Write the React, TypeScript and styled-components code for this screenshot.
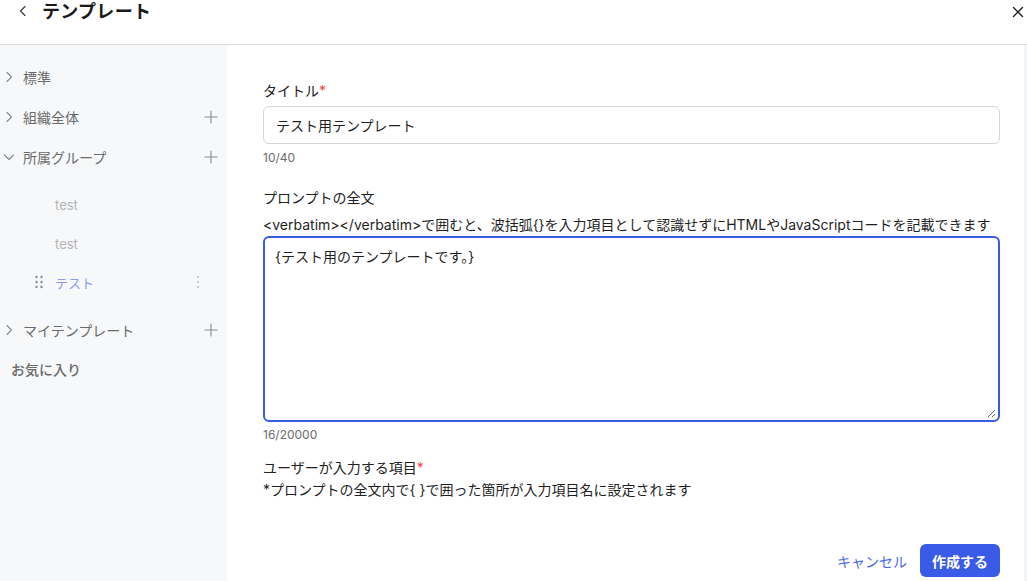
import React from 'react'
import styled, { createGlobalStyle } from 'styled-components'

const GlobalStyle = createGlobalStyle`
  html, body { margin: 0; padding: 0; background: #fff; }
  body {
    font-family: Inter, "Noto Sans CJK JP", sans-serif;
    color: #1f1f1f;
    overflow: hidden;
  }
  * { box-sizing: border-box; }
`

const Chevron = ({ dir = 'right', size = 14, color = '#8a8a8a' }: { dir?: 'right' | 'down' | 'left'; size?: number; color?: string }) => {
  const d = dir === 'right' ? 'M5 2.5 9.5 7 5 11.5' : dir === 'down' ? 'M2.5 5 7 9.5 11.5 5' : 'M9 2.5 4.5 7 9 11.5'
  return (
    <svg width={size} height={size} viewBox="0 0 14 14" fill="none">
      <path d={d} stroke={color} strokeWidth="1.1" strokeLinecap="round" strokeLinejoin="round" />
    </svg>
  )
}

const Plus = () => (
  <svg width="14" height="14" viewBox="0 0 14 14" fill="none">
    <path d="M7 1v12M1 7h12" stroke="#8a8a8a" strokeWidth="1.1" strokeLinecap="round" />
  </svg>
)

const Grip = () => (
  <svg width="10" height="14" viewBox="0 0 10 14" fill="#8a8a8a">
    {[2, 7, 12].map(y => (
      <React.Fragment key={y}>
        <circle cx="2.5" cy={y} r="1.2" />
        <circle cx="7.5" cy={y} r="1.2" />
      </React.Fragment>
    ))}
  </svg>
)

const Kebab = () => (
  <svg width="4" height="14" viewBox="0 0 4 14" fill="#c4c4c4">
    <circle cx="2" cy="2" r="1.1" />
    <circle cx="2" cy="7" r="1.1" />
    <circle cx="2" cy="12" r="1.1" />
  </svg>
)

const Close = () => (
  <svg width="14" height="14" viewBox="0 0 14 14" fill="none">
    <path d="M2.5 2.5l9 9M11.5 2.5l-9 9" stroke="#222" strokeWidth="1.4" strokeLinecap="round" />
  </svg>
)

const App = () => {
  return (
    <Page>
      <GlobalStyle />
      <Header>
        <BackButton>
          <Chevron dir="left" size={14} color="#333" />
        </BackButton>
        <Title>テンプレート</Title>
        <CloseButton>
          <Close />
        </CloseButton>
      </Header>

      <Body>
        <Sidebar>
          <Group>
            <Chevron />
            <GroupName>標準</GroupName>
          </Group>
          <Group>
            <Chevron />
            <GroupName>組織全体</GroupName>
            <AddButton><Plus /></AddButton>
          </Group>
          <Group>
            <Chevron dir="down" />
            <GroupName>所属グループ</GroupName>
            <AddButton><Plus /></AddButton>
          </Group>
          <Children>
            <Child>test</Child>
            <Child>test</Child>
            <Child active>
              <Handle><Grip /></Handle>
              テスト
              <More><Kebab /></More>
            </Child>
          </Children>
          <Group>
            <Chevron />
            <GroupName>マイテンプレート</GroupName>
            <AddButton><Plus /></AddButton>
          </Group>
          <Favorites>お気に入り</Favorites>
        </Sidebar>

        <Main>
          <Field space={22}>
            <Label>タイトル<Req>*</Req></Label>
            <Input>テスト用テンプレート</Input>
            <Counter>10/40</Counter>
          </Field>

          <Field space={15}>
            <Label>プロンプトの全文</Label>
            <Hint>&lt;verbatim&gt;&lt;/verbatim&gt;で囲むと、波括弧{'{}'}を入力項目として認識せずにHTMLやJavaScriptコードを記載できます</Hint>
            <TextArea>
              {'{テスト用のテンプレートです。}'}
              <Resize>
                <svg width="9" height="9" viewBox="0 0 9 9" fill="none">
                  <path d="M8 1 1 8M8 5 5 8" stroke="#666" strokeWidth="1" />
                </svg>
              </Resize>
            </TextArea>
            <Counter>16/20000</Counter>
          </Field>

          <Field>
            <Label>ユーザーが入力する項目<Req>*</Req></Label>
            <Note>*プロンプトの全文内で{'{ }'}で囲った箇所が入力項目名に設定されます</Note>
          </Field>

          <Actions>
            <TextButton>キャンセル</TextButton>
            <PrimaryButton>作成する</PrimaryButton>
          </Actions>
        </Main>
        <Rail />
      </Body>
    </Page>
  )
}

export default App

const Page = styled.div`
  width: 1027px;
  height: 581px;
  display: flex;
  flex-direction: column;
`
const Header = styled.header`
  height: 45px;
  flex-shrink: 0;
  display: flex;
  align-items: flex-start;
  padding: 0 0 0 16px;
  border-bottom: 1px solid #dcdcdc;
`
const BackButton = styled.span`
  width: 14px;
  height: 14px;
  display: flex;
  margin: 4px 12px 0 0;
`
const Title = styled.h1`
  margin: 0;
  font-size: 18px;
  line-height: 24px;
  font-weight: 700;
  color: #1a1a1a;
  letter-spacing: 0.3px;
  flex: 1;
`
const CloseButton = styled.span`
  width: 14px;
  height: 14px;
  display: flex;
  margin: 5px 2px 0 0;
`
const Body = styled.div`
  flex: 1;
  display: flex;
  min-height: 0;
`
const Sidebar = styled.nav`
  width: 227px;
  flex-shrink: 0;
  background: #f7f8fa;
  padding-top: 12px;
`
const Group = styled.div`
  height: 40px;
  display: flex;
  align-items: center;
  padding: 0 9px 0 2px;
  gap: 7px;
`
const GroupName = styled.span`
  flex: 1;
  font-size: 14px;
  color: #6b6b6b;
`
const AddButton = styled.span`
  display: flex;
`
const Children = styled.div`
  padding: 8px 0 8px;
`
const Child = styled.div<{ active?: boolean }>`
  position: relative;
  height: 39px;
  display: flex;
  align-items: center;
  padding-left: 55px;
  font-size: 13px;
  color: ${p => (p.active ? '#8c9bf2' : '#b4b4b4')};
`
const Handle = styled.span`
  position: absolute;
  left: 34px;
  top: 12px;
  display: flex;
`
const More = styled.span`
  position: absolute;
  left: 196px;
  top: 12px;
  display: flex;
`
const Favorites = styled.div`
  height: 37px;
  display: flex;
  align-items: center;
  padding-left: 11px;
  font-size: 14px;
  font-weight: 500;
  color: #6b6b6b;
`
const Main = styled.main`
  flex: 1;
  padding: 36px 24px 0 36px;
  display: flex;
  flex-direction: column;
`
const Rail = styled.div`
  width: 3px;
  background: #f3f4f6;
`
const Field = styled.div<{ space?: number }>`
  display: flex;
  flex-direction: column;
  margin-bottom: ${p => p.space ?? 20}px;
`
const Label = styled.div`
  font-size: 14px;
  line-height: 20px;
  color: #222;
  margin-bottom: 5px;
`
const Req = styled.span`
  color: #ef4444;
`
const Input = styled.div`
  height: 38px;
  border: 1px solid #d6d6d6;
  border-radius: 6px;
  display: flex;
  align-items: center;
  padding: 0 12px;
  font-size: 14px;
  color: #1f1f1f;
`
const Counter = styled.div`
  font-size: 12px;
  line-height: 16px;
  color: #6b6b6b;
  margin-top: 6px;
`
const Hint = styled.div`
  font-size: 14px;
  line-height: 20px;
  color: #1f1f1f;
  margin: 2px 0 1px;
  white-space: nowrap;
`
const TextArea = styled.div`
  position: relative;
  height: 186px;
  border: 2px solid #3a5ae8;
  border-radius: 6px;
  padding: 9px 10px;
  font-size: 14px;
  line-height: 20px;
  color: #1f1f1f;
  & + ${Counter} {
    margin-top: 5px;
  }
`
const Resize = styled.span`
  position: absolute;
  right: 2px;
  bottom: 2px;
  display: flex;
`
const Note = styled.div`
  font-size: 14px;
  line-height: 20px;
  color: #1f1f1f;
  margin-top: -3px;
`
const Actions = styled.div`
  margin-top: auto;
  margin-bottom: 4px;
  display: flex;
  justify-content: flex-end;
  align-items: center;
  gap: 13px;
`
const TextButton = styled.button`
  border: none;
  background: none;
  font: inherit;
  font-size: 14px;
  color: #4a67e8;
  padding: 0;
  cursor: pointer;
`
const PrimaryButton = styled.button`
  height: 33px;
  padding: 0 12px;
  border: none;
  border-radius: 6px;
  background: #3a5ae8;
  color: #fff;
  font: inherit;
  font-size: 14px;
  font-weight: 600;
  cursor: pointer;
`
